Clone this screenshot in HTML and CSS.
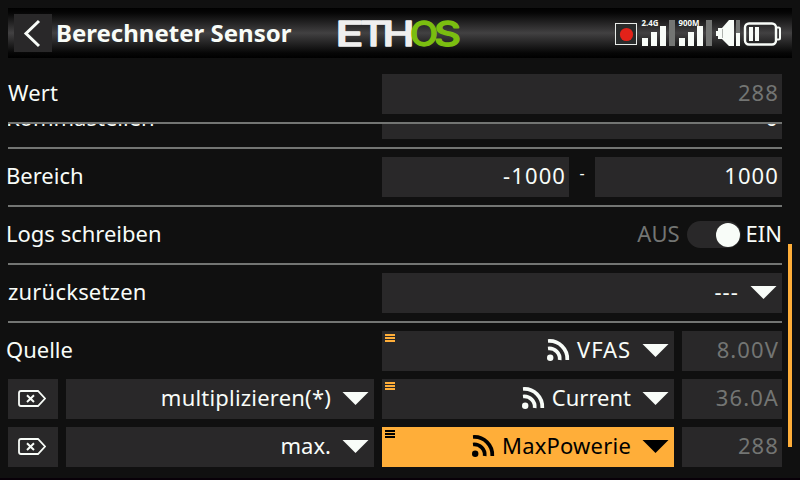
FILE: index.html
```html
<!DOCTYPE html>
<html lang="de">
<head>
<meta charset="utf-8">
<title>Berechneter Sensor</title>
<link rel="stylesheet" href="styles.css">
</head>
<body>
<svg class="defs" width="0" height="0">
  <defs>
    <symbol id="rss" viewBox="0 0 24 24"><circle cx="4.2" cy="19.8" r="3.2"/><path d="M2 10.5A10.5 10.5 0 0 1 13.7 22M2 3A18 18 0 0 1 21.3 22" fill="none" stroke="currentColor" stroke-width="3.7"/></symbol>
    <symbol id="arrow" viewBox="0 0 26 13"><path d="M0 0H26L13 13Z"/></symbol>
    <symbol id="menu" viewBox="0 0 10 8"><path d="M0 0H10V2H0ZM0 3H10V5H0ZM0 6H10V8H0Z"/></symbol>
    <symbol id="remove" viewBox="0 0 28 17"><path d="M3 1H20L27 8.5L20 16H3Q1 16 1 14V3Q1 1 3 1Z" fill="none" stroke="currentColor" stroke-width="1.8"/><path d="M9 5.3L16 12M16 5.3L9 12" fill="none" stroke="currentColor" stroke-width="2"/></symbol>
  </defs>
</svg>
<header class="topbar">
  <button class="back" aria-label="Zurück"><svg width="38" height="38" viewBox="0 0 38 38"><path d="M25 7L12 19.5L25 32" fill="none" stroke="currentColor" stroke-width="3"/></svg></button>
  <h1>Berechneter Sensor</h1>
  <svg class="logo" width="126" height="50" viewBox="0 0 126 50">
    <text x="-.5" y="37.500" textLength="28" lengthAdjust="spacingAndGlyphs">E</text>
    <text x="24" y="37.500" textLength="27" lengthAdjust="spacingAndGlyphs">T</text>
    <text x="46.500" y="37.500" textLength="32" lengthAdjust="spacingAndGlyphs">H</text>
    <text class="green" x="74" y="37.500" textLength="28" lengthAdjust="spacingAndGlyphs">O</text>
    <text class="green" x="98" y="37.500" textLength="27" lengthAdjust="spacingAndGlyphs">S</text>
  </svg>
  <svg class="status" width="168" height="30" viewBox="0 0 168 30">
    <rect x=".5" y="5.5" width="21" height="21" fill="#292b2b" stroke="#e8ebe8"/>
    <circle cx="11.5" cy="16.5" r="6.6" fill="#e32219"/>
    <path d="M27 20h6v8h-6zM36 14h6v14h-6zM45 8h6v20h-6zM64 20h6v8h-6zM73 14h6v14h-6zM82 8h6v20h-6z"/>
    <path class="off" d="M54 2h6v26h-6zM91 2h6v26h-6zM121 2h4v13h-4z"/>
    <text x="26.500" y="8" textLength="17" lengthAdjust="spacingAndGlyphs">2.4G</text>
    <text x="63.500" y="8" textLength="21" lengthAdjust="spacingAndGlyphs">900M</text>
    <path d="M103 10H107L114 2H119V28H114L107 21H103V18H101V13H103ZM121 15h4v13h-4z"/>
    <path d="M107.500 11V20" fill="none" stroke="#aeb2ae"/>
    <rect x="130" y="5.500" width="31" height="21" rx="4" fill="none" stroke="#f8fcf8" stroke-width="2.400"/>
    <path d="M161 9.500H163.500Q165 9.500 165 11V20Q165 21.500 163.500 21.500H161" fill="none" stroke="#f8fcf8" stroke-width="2"/>
    <path d="M134 9h4v14h-4zM140 9h4v14h-4z"/>
  </svg>
</header>
<main>
  <section class="row first"><label class="in mid">Wert</label><div class="field num dim">288</div></section>
  <section class="row clipped"><label>Kommastellen</label><div class="field num">0</div></section>
  <section class="row"><label>Bereich</label><div class="range"><div class="field num">-1000</div><span>-</span><div class="field num">1000</div></div></section>
  <section class="row"><label>Logs schreiben</label><div class="switch"><span class="dim">AUS</span><i class="toggle"></i><span>EIN</span></div></section>
  <section class="row"><label class="in mid">zurücksetzen</label><div class="field select num">---<svg class="arrow"><use href="#arrow"/></svg></div></section>
  <section class="row source"><label>Quelle</label><div class="field select wide"><svg class="menu"><use href="#menu"/></svg><svg class="rss"><use href="#rss"/></svg>VFAS<svg class="arrow"><use href="#arrow"/></svg></div><div class="field num dim">8.00V</div></section>
  <section class="calc"><button aria-label="Entfernen"><svg class="remove"><use href="#remove"/></svg></button><div class="field select mid">multiplizieren(*)<svg class="arrow"><use href="#arrow"/></svg></div><div class="field select"><svg class="menu"><use href="#menu"/></svg><svg class="rss"><use href="#rss"/></svg>Current<svg class="arrow"><use href="#arrow"/></svg></div><div class="field num dim">36.0A</div></section>
  <section class="calc"><button aria-label="Entfernen"><svg class="remove"><use href="#remove"/></svg></button><div class="field select">max.<svg class="arrow"><use href="#arrow"/></svg></div><div class="field select mid active"><svg class="menu"><use href="#menu"/></svg><svg class="rss"><use href="#rss"/></svg>MaxPowerie<svg class="arrow"><use href="#arrow"/></svg></div><div class="field num dim">288</div></section>
</main>
<div class="scrollbar"></div>
</body>
</html>
```
FILE: styles.css
```css
* { box-sizing: border-box; }
body {
  margin: 0; width: 800px; height: 480px; overflow: hidden;
  padding: 8px 8px 0; background: #101010; color: #f8fcf8;
  border-bottom: 2px solid #080008;
  font: 22px/37px "Noto Sans", sans-serif; letter-spacing: 0;
}
svg { display: block; flex: none; fill: currentColor; }
.defs { position: absolute; }
button { border: 0; padding: 0; color: inherit; background: #292829; display: flex; align-items: center; justify-content: center; }
.topbar {
  display: flex; height: 50px; align-items: flex-start; margin-bottom: 16px;
  background: linear-gradient(#000 0%, #060606 10%, #424142 50%, #060606 90%, #000 100%);
}
.back { width: 38px; height: 38px; margin: 6px 4px 0 6px; }
h1 { margin: 0; width: 280px; font: 700 24px/50px "Noto Sans", sans-serif; letter-spacing: 0; white-space: nowrap; }
.logo { font: 500 33.5px Inter, sans-serif; fill: #efefef; stroke: #efefef; stroke-width: 1.3px; stroke-linejoin: round; overflow: visible; }
.green { fill: #7bbe10; stroke: #7bbe10; }
.status { margin: 10px 0 0 153px; font: 700 8px "Noto Sans", sans-serif; }
.off { fill: #737573; }
main { width: 774px; }
.row {
  display: grid; grid-template-columns: 374px 400px; height: 58px;
  padding-top: 8px; border-bottom: 2px solid #737573;
}
.row.first { height: 50px; padding-top: 0; }
.row.clipped { height: 25px; padding: 0; overflow: hidden; align-content: end; }
.clipped label, .clipped .field { height: 40px; margin-bottom: 8px; }
label { margin-left: -2px; white-space: nowrap; }
label.in { margin-left: 0; }
.mid { letter-spacing: .2px; }
.wide { letter-spacing: .9px; }
.num { letter-spacing: 1.1px; }
.field { background: #292829; height: 40px; padding: 0 3px 3px 0; text-align: right; white-space: nowrap; }
.dim { color: #737573; }
.range { display: grid; grid-template-columns: 187px 26px 187px; }
.range span { font-size: 16px; line-height: 32px; text-align: center; }
.switch { display: flex; justify-content: flex-end; align-items: center; height: 40px; }
.switch span { padding-bottom: 3px; }
.toggle { width: 54px; height: 27px; border-radius: 14px; background: #292829; margin: 0 5px 1px 7px; padding: 2px 1px; display: flex; justify-content: flex-end; }
.toggle::after { content: ""; width: 24px; height: 24px; border-radius: 50%; background: #f8fcf8; }
.select { position: relative; display: flex; justify-content: flex-end; align-items: center; padding-right: 5px; }
.arrow { width: 27px; height: 13px; margin: 2px 0 0 11px; }
.rss { width: 24px; height: 24px; margin-right: 7px; }
.menu { position: absolute; left: 3px; top: 3px; width: 10px; height: 8px; color: #ffae39; }
.source, .calc { display: grid; height: 48px; padding-top: 8px; border: 0; column-gap: 8px; }
.source { grid-template-columns: 366px 292px 100px; }
.calc { grid-template-columns: 50px 308px 292px 100px; }
.remove { width: 28px; height: 17px; margin: 0 2px 2px 0; }
.active, .active .menu { color: #000; }
.active { background: #ffae39; }
.scrollbar { position: absolute; left: 788px; top: 244px; width: 4px; height: 203px; background: #ffae39; }
```
